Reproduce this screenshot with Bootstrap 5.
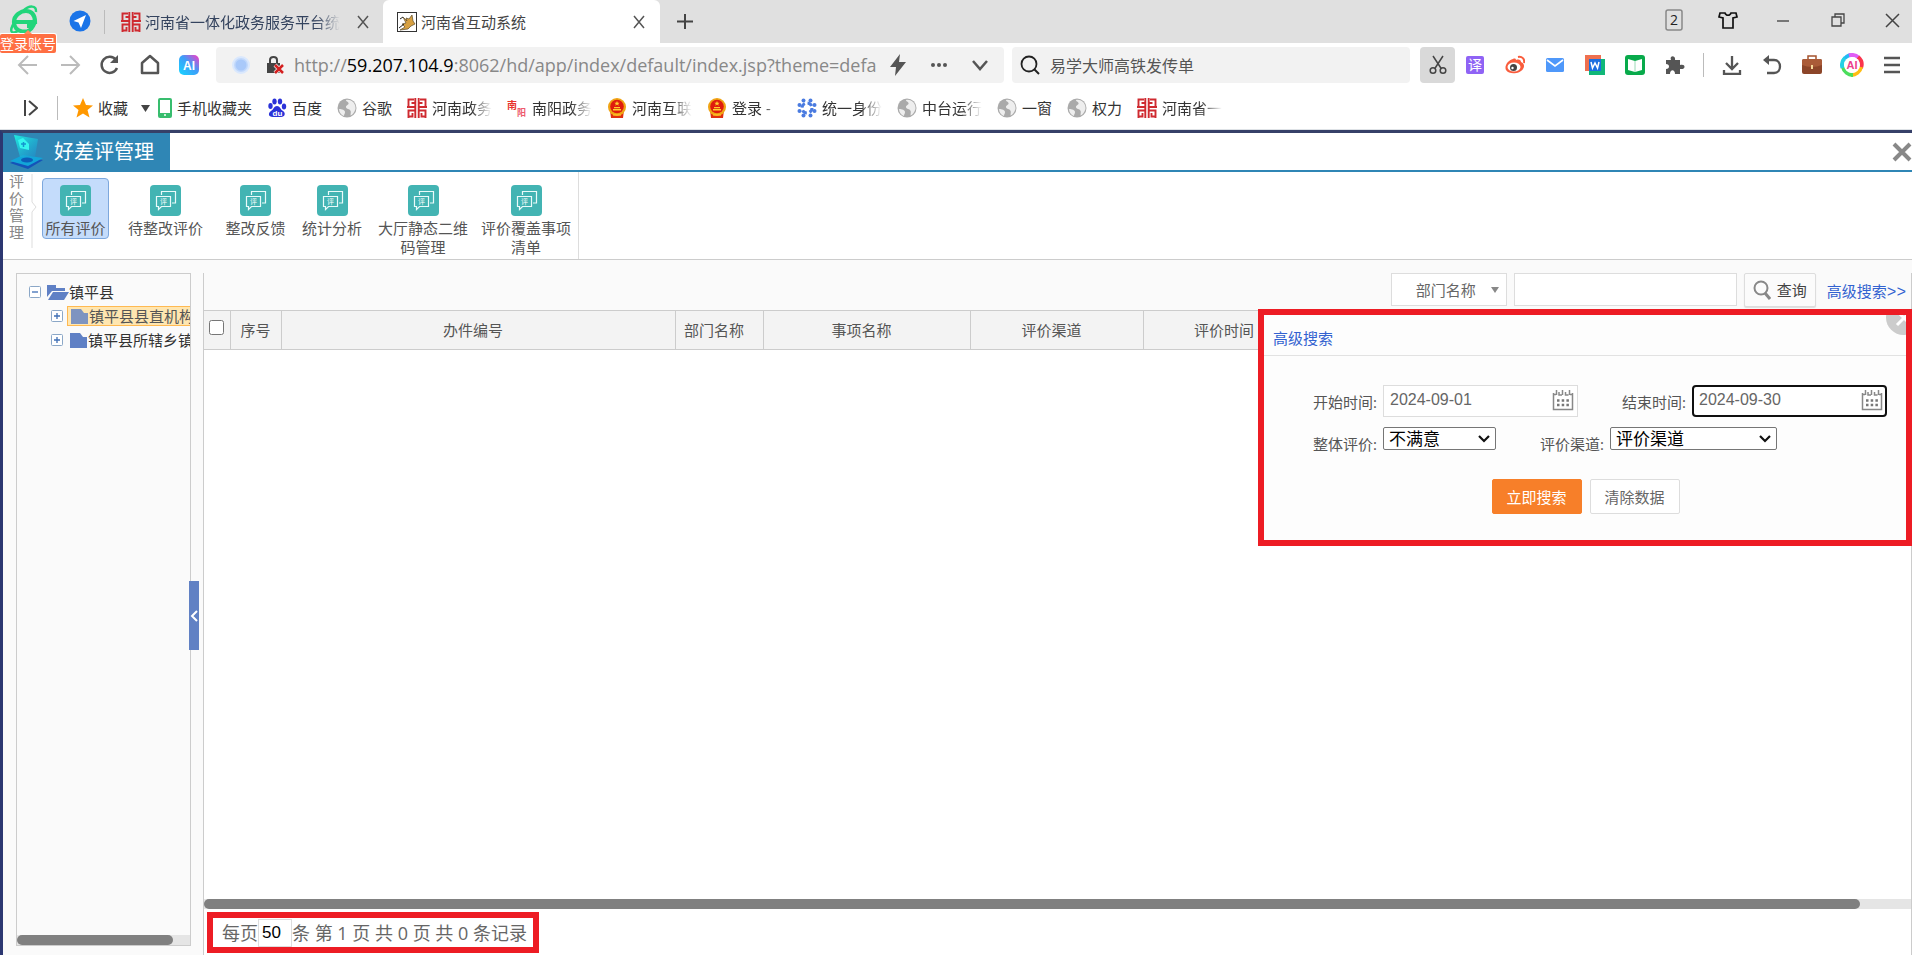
<!DOCTYPE html>
<html lang="zh-CN">
<head>
<meta charset="utf-8">
<meta name="viewport" content="width=device-width, initial-scale=1">
<title>河南省互动系统</title>
<link href="https://cdn.jsdelivr.net/npm/bootstrap@5.3.0/dist/css/bootstrap.min.css" rel="stylesheet">
<style>
:root{--line:#ccc;--blue:#2f86b5;--ink:#555;--red:#ed1c24}
html,body{height:100%}
body{font:15px/20px "Open Sans","Noto Sans CJK SC",sans-serif;color:var(--ink);background:#fff;overflow:hidden}
a{text-decoration:none;color:inherit}
svg{display:block;flex:none}
.ico{width:20px;height:20px}
.plain{border:0;background:none;padding:0;color:inherit;display:flex;align-items:center;justify-content:center}
.cjk{font-family:"Noto Sans CJK SC",sans-serif}
/* browser frame */
.tabstrip{height:43px;background:#e0e0e0}
.account{width:60px}
.account-tip{left:0;top:34px;z-index:2;height:19px;line-height:19px;width:56px;font-size:14px;color:#fff;background:#ff6f43;border-radius:2px;white-space:nowrap;text-align:center;box-shadow:0 0 0 1px #fff}
.account-tip::before{content:"";position:absolute;left:24px;top:-4px;border:solid transparent;border-width:0 4px 4px;border-bottom-color:#ff8a5c}
.vline{width:1px;height:24px;background:#bbb}
.tabstrip .vline{margin:0 12px}
.page-tab{height:43px;color:#34435e;padding:0 13px 0 4px}
.page-tab.current{background:#fff;border-radius:6px 6px 0 0;width:277px;color:#444;padding:0 14px}
.fade-end{white-space:nowrap;-webkit-mask-image:linear-gradient(90deg,#000 65%,transparent);mask-image:linear-gradient(90deg,#000 65%,transparent)}
.tab-title{-webkit-mask-image:linear-gradient(90deg,#000 88%,transparent);mask-image:linear-gradient(90deg,#000 88%,transparent)}
.toolbar{height:44px}
.urlbox{background:#f2f2f2;border-radius:4px;height:36px}
.urltext{font-size:18px;line-height:36px;color:#888;white-space:nowrap}
.urltext b{font-weight:400;color:#000}
.nav-keys{padding:0 16px;gap:16px}
.search-web{flex:0 0 398px;margin-right:10px}
.search-web input{font-size:16px;color:#555;border:0;background:none;outline:0;padding:0;width:300px}
.ext{width:40px;height:36px}
.ext.on{background:#d9d9d9;border-radius:4px;width:35px}
.bookmarks{height:43px;gap:15px;color:#333}
.bookmarks a{gap:5px}
.cut{width:60px}
.cut-sm{width:50px}
/* application */
.app{border-top:3px solid #364068;border-left:3px solid #2c3771}
.titlebar{height:39px;border-bottom:2px solid var(--blue)}
.titlebar h1{font-size:20px;line-height:37px;background:var(--blue);color:#fff;width:167px;padding-left:7px;gap:10px;font-weight:400;height:37px}
.ribbon{height:88px;border-bottom:1px solid var(--line)}
.ribbon-group{width:576px;border-right:1px solid #ddd}
.ribbon-name{width:26px;padding:1px 6px 0;line-height:17px;color:#888}
.tools{padding:6px 0 0 4px}
.tool{border:1px solid transparent;border-radius:4px;padding:6px 0 0;text-align:center;line-height:19px;background:none;color:#555;align-items:center;display:flex;flex-direction:column;gap:3px}
.tool.active{background:#c4dcfb;border-color:#7da8dd;height:61px;width:67px}
.w-a{width:113px}.w-b{width:67px}.w-c{width:86px}.w-d{width:96px}.w-e{width:110px}
.work{background:#fafafa;padding:13px 0 0 13px}
.tree{flex:0 0 175px;border:1px solid var(--line);margin-bottom:9px;color:#333}
.tree-rows{padding-top:6px}
.tree-row{height:24px;white-space:nowrap}
.tree-row.sub{padding-left:34px}
.pick{height:20px;padding:0 0 0 3px}
.pick.sel{background:#ffe6b0;border:1px solid #ffb951;color:#555}
.scroll{height:10px;background:#e5e5e5}
.scroll div{height:10px;background:#808080;border-radius:5px}
.rail{flex:0 0 12px}
.fold{left:-2px;top:308px;width:10px;height:69px;background:#6181c4;z-index:2}
.listing{border:solid var(--line);border-width:0 1px}
.filter{height:37px;background:#fafafa;padding-right:5px;gap:7px}
.filter .field{height:33px;border:1px solid #ddd;background:#fff;border-radius:0;font-size:15px;color:#666;outline:0}
.field-pick{width:116px;padding-left:24px;-webkit-appearance:none;appearance:none}
.more{color:#3262d0}
.more span{font:16px "Liberation Mono",monospace}
.caret{right:8px;top:14px;border:solid transparent;border-width:6px 4px 0;border-top-color:#888}
.query{width:72px;height:34px;border:1px solid #ddd;background:#fbfbfb;gap:6px;color:#444;padding:0;border-radius:2px;font-size:15px;box-shadow:0 1px 1px #ddd}
.heads{table-layout:fixed;width:100%;margin:0;border-collapse:collapse}
.heads th{height:39px;font-weight:400;text-align:center;background:#f3f3f3;border:1px solid var(--line);padding:0 10px 0 0;white-space:nowrap}
.heads th:first-child{border-left:0;padding:0}
.heads th:nth-child(2){padding:0}
.heads input{width:15px;height:15px;display:block;margin:-6px 0 0 5px}
.advanced{right:-1px;top:36px;width:654px;height:237px;border:6px solid var(--red);background:#fdfdfd;z-index:3;overflow:hidden}
.advanced h2{font-size:15px;line-height:20px;font-weight:400;color:#3262d0;margin:0;padding:13px 0 7px 9px;border-bottom:1px solid #e2e2e2;height:41px}
.close-round{right:-15px;top:-15px;width:35px;height:35px;border-radius:50%;background:#ccc}
.adv-form{padding:29px 0 0 49px}
.adv-row{height:42px;align-items:flex-start}
.adv-row label{width:70px;line-height:34px;white-space:nowrap}
.adv-row .second{margin-left:44px}
.datebox{width:195px;height:32px;border:1px solid #ddd;background:#fff;font:16px/20px "Liberation Sans",sans-serif;color:#666;outline:0;padding:0 6px 2px}
.datebox.focus{border:2px solid #101010;border-radius:4px;padding-left:5px}
.date-wrap svg{position:absolute;right:4px;top:4px}
.native{height:23px;border:1px solid #767676;border-radius:2px;color:#000;font:17px/20px "Noto Sans CJK SC",sans-serif;padding:0 0 1px 5px;-webkit-appearance:none;appearance:none;background:#fff url("data:image/svg+xml,%3Csvg xmlns='http://www.w3.org/2000/svg' width='12' height='8'%3E%3Cpath d='M1 1l5 5 5-5' fill='none' stroke='%23111' stroke-width='2.200'/%3E%3C/svg%3E") no-repeat right 5px center}
.adv-actions{padding:10px 48px 0 0}
.advanced .btn{width:90px;height:35px;border-radius:2px;font-size:15px;line-height:20px;padding:0}
.go,.go:hover{background:#f77f29;color:#fff;border-color:#f77f29}
.wipe{background:#fff;border-color:#ddd;color:#666}
.pager{border:6px solid var(--red);width:332px;height:41px;margin:3px 0 2px 3px;font-size:18px;padding-left:9px;white-space:nowrap;color:#666}
.pager input{width:34px;height:28px;border:1px solid #ddd;font:17px "Liberation Sans",sans-serif;color:#000;padding:0 0 0 3px;margin:0}
</style>
</head>
<body class="d-flex flex-column">
<svg width="0" height="0" class="position-absolute">
 <defs>
 <symbol id="gov" viewBox="0 0 20 20"><g fill="none" stroke="#cf2a30" stroke-width="1.900"><path d="M8.300 0v20M11.700 0v20M8 9H0M12 9h8M8 5H4.500M12 5h3.500M7 1.500H1.500V9M13 1.500h5.500V9M8 12.500H1.500V20M12 12.500h6.500V20M1 18.500h4.500V15M19 18.500h-4.500V15"/></g></symbol>
 <symbol id="globe" viewBox="0 0 20 20"><circle cx="10" cy="10" r="9.500" fill="#aaa"/><path d="M9 2c6-1 10 4 9.500 9-1 3-3 6-5 6.500 0-2 1-4-.5-5.500s-4-1-4-3 3-2 2.500-4S9 4 9 2zM2 11c3 0 6 1 6 3s-1 2-1 4C4 17 2 14 2 11z" fill="#fff" opacity=".8"/></symbol>
 <symbol id="emblem" viewBox="0 0 20 20"><path d="M3 12h14l-1 8H4z" fill="#e0300f"/><circle cx="10" cy="9" r="9" fill="#f0a414"/><circle cx="10" cy="8.500" r="6.800" fill="#df1c0d"/><path d="M10 3l.8 1.700h1.800l-1.400 1.200.5 1.800L10 6.600 8.300 7.700l.5-1.800-1.400-1.200h1.800zM6 11h8v1.500H6zM7 9h6v1.200H7zM6 16.500h8v1H6z" fill="#ffce2e"/></symbol>
 <symbol id="cross" viewBox="0 0 14 14"><path d="M2 1l10 12M12 1L2 13" stroke="#555" stroke-width="1.500" fill="none"/></symbol>
 <symbol id="review" viewBox="0 0 31 31"><rect width="31" height="31" rx="4" fill="#43b4b3"/><g fill="none" stroke="#eafafa" stroke-width="1.200"><path d="M11.500 10V6.500h14V18H22M6.500 11.500h14v10h-9l-3 3v-3h-2z"/></g><text x="10" y="19" font-size="7" fill="#fff" font-family="Noto Sans CJK SC">评</text></symbol>
 <symbol id="folder" viewBox="0 0 18 16"><path d="M0 1h10l3 4h4v11H0z" fill="#5f80c5"/></symbol>
 <symbol id="plus" viewBox="0 0 12 12"><rect x=".5" y=".5" width="11" height="11" rx="1" fill="#fff" stroke="#8ba7c7"/><path d="M3 6h6M6 3v6" stroke="#3f6fb5" stroke-width="1.300"/></symbol>
 <symbol id="cal" viewBox="0 0 22 22"><path d="M1.500 4v16.500h19V4M4.500 1v5M10.500 1v5M17.500 1v5M1 5.500h3M7 3v3h3M13.500 3v3h3M20 5.500h-2" fill="none" stroke="#888" stroke-width="1.500"/><path d="M5 11.500h12M5 16h12" stroke="#777" stroke-width="2.500" stroke-dasharray="2.500 2.200"/></symbol>
 </defs>
</svg>

<header>
 <div class="tabstrip d-flex align-items-center position-relative">
  <div class="account ps-2 pb-1"><svg width="32" height="32" viewBox="0 0 32 32"><path d="M7 18h20c0-8-4-11-9-11S6 11 6 18c0 11 15 13 19 4h-6" fill="none" stroke="#22d57b" stroke-width="4.200"/><path d="M6 19C1 27 3 31 10 27M15 7c6-6 14-6 13 1" fill="none" stroke="#22d57b" stroke-width="2.500"/></svg></div>
  <a href="#" class="account-tip position-absolute cjk">登录账号</a>
  <svg class="ms-2" width="24" height="24" viewBox="0 0 24 24"><circle cx="12" cy="11" r="10.500" fill="#1b74e8"/><path d="M18 5L5.500 11l5 1.500L13 18z" fill="#fff"/></svg>
  <span class="vline"></span>
  <div class="page-tab d-flex align-items-center">
   <svg class="ico me-1"><use href="#gov"/></svg><span class="fade-end tab-title">河南省一体化政务服务平台统</span>
   <button class="plain ms-3" aria-label="关闭"><svg width="14" height="14"><use href="#cross"/></svg></button>
  </div>
  <div class="page-tab current d-flex align-items-center">
   <svg class="ico me-1" viewBox="0 0 20 20"><rect x=".5" y=".5" width="19" height="19" fill="#fff" stroke="#333"/><path d="M9 6l3 1 3-4 1 6 2 3-4 2-3 3-8 1 5-3-3-3 4-1-3-6 4 4z" fill="#d7a041" stroke="#5b4a28" stroke-width=".7"/><path d="M2 16l5-4M3 7l3-2" stroke="#222"/></svg><span>河南省互动系统</span>
   <button class="plain ms-auto" aria-label="关闭"><svg width="14" height="14"><use href="#cross"/></svg></button>
  </div>
  <button class="plain ms-3" aria-label="新标签"><svg width="18" height="18" viewBox="0 0 18 18"><path d="M9 1v15M1 8.500h16" stroke="#444" stroke-width="2"/></svg></button>
  <div class="ms-auto d-flex align-items-center pe-1 pb-1">
   <button class="plain me-4" aria-label="窗口"><svg width="33" height="22" viewBox="0 0 33 22"><rect x="9" y="1" width="16" height="20" rx="2" fill="none" stroke="#888" stroke-width="1.500"/><text x="13" y="16" font-size="14" font-family="Open Sans" fill="#222">2</text></svg></button>
   <button class="plain me-4" aria-label="皮肤"><svg width="30" height="20" viewBox="0 0 30 20"><path d="M6 3h5c1 3 5 3 6 0h5l1 4-4 1v10H9V8L5 7z" fill="none" stroke="#111" stroke-width="1.700"/></svg></button>
   <button class="plain me-4" aria-label="最小化"><svg width="30" height="20" viewBox="0 0 30 20"><path d="M9 11h12" stroke="#555" stroke-width="1.500"/></svg></button>
   <button class="plain me-4" aria-label="还原"><svg width="32" height="20" viewBox="0 0 32 20"><path d="M10 7h9v9h-9zM13 7V4h9v9h-3" fill="none" stroke="#444" stroke-width="1.300"/></svg></button>
   <button class="plain" aria-label="关闭窗口"><svg width="30" height="20" viewBox="0 0 30 20"><path d="M8 4l13 13M21 4L8 17" stroke="#444" stroke-width="1.500"/></svg></button>
  </div>
 </div>

 <div class="toolbar d-flex align-items-center">
  <div class="nav-keys d-flex">
   <button class="plain" aria-label="后退"><svg width="25" height="22" viewBox="0 0 25 22"><path d="M21 11H4M12 2l-9 9 9 9" fill="none" stroke="#bbb" stroke-width="2"/></svg></button>
   <button class="plain" aria-label="前进"><svg width="25" height="22" viewBox="0 0 25 22"><path d="M4 11h17M13 2l9 9-9 9" fill="none" stroke="#bbb" stroke-width="2"/></svg></button>
   <button class="plain" aria-label="刷新"><svg width="24" height="22" viewBox="0 0 24 22"><path d="M19 14a8 8 0 1 1-1-8" fill="none" stroke="#555" stroke-width="2.500"/><path d="M20 1v8h-8z" fill="#555"/></svg></button>
   <button class="plain" aria-label="主页"><svg width="24" height="22" viewBox="0 0 24 22"><path d="M4 9l8-7 8 7v10H4z" fill="none" stroke="#555" stroke-width="2.500" stroke-linejoin="round"/></svg></button>
   <button class="plain" aria-label="AI"><svg width="22" height="22" viewBox="0 0 22 22"><defs><linearGradient id="ai" x1="0" x2="1" y1="1" y2="0"><stop stop-color="#15d6ff"/><stop offset=".55" stop-color="#3f9cf8"/><stop offset="1" stop-color="#ff37c4"/></linearGradient></defs><rect x="1" y="1" width="20" height="20" rx="5" fill="url(#ai)"/><text x="5" y="16" font-size="12" font-weight="700" fill="#fff" font-family="Liberation Sans">AI</text></svg></button>
  </div>
  <div class="urlbox d-flex align-items-center flex-grow-1 px-3 me-2" style="min-width:0">
   <svg width="18" height="20" viewBox="0 0 18 20"><circle cx="9" cy="10" r="8" fill="#c1d8fb" stroke="#dae8fd" stroke-width="2"/><circle cx="9" cy="10" r="5.500" fill="#a9c9fa"/></svg>
   <svg class="ms-3 me-2" width="20" height="20" viewBox="0 0 20 20"><path d="M4 8V5c0-4 7-4 7 0v3" fill="none" stroke="#444" stroke-width="2"/><path d="M1 8h13v10H1z" fill="#444"/><path d="M9 10l8 8M17 10l-8 8" stroke="#f2f2f2" stroke-width="4"/><path d="M9 10l8 8M17 10l-8 8" stroke="#d42020" stroke-width="2.500"/></svg>
   <div class="urltext flex-grow-1">http://<b>59.207.104.9</b>:8062/hd/app/index/default/index.jsp?theme=defa</div>
   <svg class="me-3 ms-2" width="16" height="22" viewBox="0 0 16 22"><path d="M10 0L0 13h6L5 22 16 8H9z" fill="#555"/></svg>
   <svg class="mx-2" width="18" height="6" viewBox="0 0 18 6"><g fill="#555"><circle cx="3" cy="3" r="2"/><circle cx="9" cy="3" r="2"/><circle cx="15" cy="3" r="2"/></g></svg>
   <svg class="ms-3" width="16" height="12" viewBox="0 0 16 12"><path d="M1 2l7 8 7-8" fill="none" stroke="#555" stroke-width="2.500"/></svg>
  </div>
  <div class="urlbox search-web d-flex align-items-center ps-2">
   <svg class="me-2" width="22" height="22" viewBox="0 0 22 22"><circle cx="9" cy="10" r="7.500" fill="none" stroke="#222" stroke-width="1.800"/><path d="M14 15l5 5" stroke="#222" stroke-width="2"/></svg>
   <input class="cjk" aria-label="搜索" value="易学大师高铁发传单">
  </div>
  <div class="d-flex align-items-center">
   <button class="plain ext on" aria-label="截图"><svg width="20" height="20" viewBox="0 0 20 20"><g fill="none" stroke="#444" stroke-width="1.500"><path d="M5 1l8.500 13M15 1L6.500 14"/><circle cx="5" cy="15.500" r="2.800"/><circle cx="15" cy="15.500" r="2.800"/></g></svg></button>
   <button class="plain ext" aria-label="翻译"><svg class="ico" viewBox="0 0 20 20"><rect x="1" y="1" width="18" height="18" rx="2" fill="#8f63f5"/><text x="3" y="15" font-size="14" fill="#fff" font-family="Noto Sans CJK SC">译</text></svg></button>
   <button class="plain ext" aria-label="微博"><svg class="ico" viewBox="0 0 20 20"><path d="M8 4c2-1 3 0 3 1 3-1 5 0 5 2 3 1 4 4 2 7-3 5-14 6-17 1C-1 11 3 5 8 4z" fill="#f95c3c"/><ellipse cx="9" cy="12" rx="6.500" ry="4.500" fill="#fff"/><circle cx="8.500" cy="12.500" r="3.500" fill="#444"/><circle cx="7.500" cy="13" r="1.200" fill="#fff"/><path d="M13 2c4-1 7 2 6 6" fill="none" stroke="#f95c3c" stroke-width="2"/></svg></button>
   <button class="plain ext" aria-label="邮箱"><svg class="ico" viewBox="0 0 20 20"><rect x="1" y="3" width="18" height="14" rx="1.500" fill="#4f98fa"/><path d="M2 5l8 6 8-6" fill="none" stroke="#fff" stroke-width="1.600"/></svg></button>
   <button class="plain ext" aria-label="文档"><svg class="ico" viewBox="0 0 20 20"><path d="M0 0h16v16H0z" fill="#ef704f"/><path d="M4 4h16v16H4z" fill="#10b778"/><path d="M4 4h12v12H4z" fill="#1b6fe0"/><path d="M6 7l1.500 6L10 8l2.500 5L14 7" fill="none" stroke="#fff" stroke-width="1.500"/></svg></button>
   <button class="plain ext" aria-label="阅读"><svg class="ico" viewBox="0 0 20 20"><rect width="20" height="20" rx="3" fill="#08aa4b"/><path d="M3 4l7 2 7-2v11l-7 2-7-2z" fill="#fff"/><path d="M10 6v11" stroke="#9cdab6"/></svg></button>
   <button class="plain ext" aria-label="扩展"><svg class="ico" viewBox="0 0 20 20"><path d="M1 5h5c-2-5 5-5 4 0h5v5c6-2 6 5 0 4v5h-5c0-5-5-5-5 0H1v-5c4 0 4-5 0-5z" fill="#555"/></svg></button>
   <span class="vline ms-2"></span>
   <button class="plain ext ms-2" aria-label="下载"><svg class="ico" viewBox="0 0 20 20"><path d="M10 1v13M4 8l6 6 6-6M2 15v4h16v-4" fill="none" stroke="#555" stroke-width="2.300"/></svg></button>
   <button class="plain ext" aria-label="撤销"><svg class="ico" viewBox="0 0 20 20"><path d="M6 5h6c8 0 8 13 0 13H5" fill="none" stroke="#555" stroke-width="2.300"/><path d="M7 0v10L1 5z" fill="#555"/></svg></button>
   <button class="plain ext" aria-label="工具箱"><svg class="ico" viewBox="0 0 20 20"><path d="M6 4V1h8v3" fill="none" stroke="#a5532e" stroke-width="1.500"/><rect y="4" width="20" height="15" rx="2" fill="#8c4529"/><path d="M0 6q0-2 2-2h16q2 0 2 2v4q-10 4-20 0z" fill="#aa5b38"/><path d="M9 10h2v4H9z" fill="#f5d89a"/></svg></button>
   <button class="plain ext" aria-label="AI助手"><svg width="24" height="24" viewBox="0 0 24 24"><g fill="none" stroke-width="4"><path d="M4 7a10 10 0 0 1 7-5" stroke="#22b8f7"/><path d="M9 2.500a10 10 0 0 1 10 2.500" stroke="#e05cf5"/><path d="M18 4a10 10 0 0 1 3 11" stroke="#fb344c"/><path d="M21 14a10 10 0 0 1-10 8" stroke="#ffbd12"/><path d="M13 22a10 10 0 0 1-10-8" stroke="#4bdd5c"/><path d="M2.500 15A10 10 0 0 1 5 5" stroke="#23d1e4"/></g><circle cx="12" cy="12" r="8" fill="#fff"/><text x="6.500" y="16" font-size="11" font-weight="700" fill="#ec3f8c" font-family="Liberation Sans">AI</text></svg></button>
   <button class="plain ext" aria-label="菜单"><svg class="ico" viewBox="0 0 20 20"><path d="M2 3h16M2 10h16M2 17h16" stroke="#555" stroke-width="2.300"/></svg></button>
  </div>
 </div>

 <nav class="bookmarks d-flex align-items-center ps-4 border-bottom">
  <svg width="14" height="18" viewBox="0 0 14 18"><path d="M1 1v16M5 2l8 7-8 7" fill="none" stroke="#444" stroke-width="2"/></svg>
  <span class="vline ms-1"></span>
  <div class="d-flex gap-2">
  <a href="#" class="d-flex align-items-center"><svg class="ico" viewBox="0 0 20 20"><path d="M10 0l3 7 7 .5-5.500 4.500 2 7.500L10 15.500 3.500 19.500l2-7.500L0 7.500 7 7z" fill="#ff9800"/></svg>收藏<svg class="ms-2" width="9" height="7"><path d="M0 0h9L4.500 7z" fill="#444"/></svg></a>
  <a href="#" class="d-flex align-items-center"><svg width="14" height="20" viewBox="0 0 14 20"><rect x="1" y="1" width="12" height="18" rx="1" fill="#fff" stroke="#38bd6e" stroke-width="2"/><path d="M1 15h12v4H1z" fill="#38bd6e"/><circle cx="7" cy="17" r="1" fill="#fff"/></svg>手机收藏夹</a>
  </div>
  <a href="#" class="d-flex align-items-center"><svg class="ico" viewBox="0 0 20 20"><g fill="#2a32d8"><ellipse cx="3.500" cy="8" rx="2.200" ry="3"/><ellipse cx="7.500" cy="3.500" rx="2.200" ry="3"/><ellipse cx="13" cy="3.500" rx="2.200" ry="3"/><ellipse cx="17" cy="8.500" rx="2.200" ry="3"/><path d="M10 8c3 0 3 3 6 5s2 6-2 6H6c-5 0-5-4-2-6s3-5 6-5z"/></g><text x="5.500" y="17.500" font-size="8" font-weight="700" fill="#fff" font-family="Liberation Sans">du</text></svg>百度</a>
  <a href="#" class="d-flex align-items-center"><svg class="ico"><use href="#globe"/></svg>谷歌</a>
  <a href="#" class="d-flex align-items-center"><svg class="ico"><use href="#gov"/></svg><span class="fade-end cut">河南政务</span></a>
  <a href="#" class="d-flex align-items-center"><svg class="ico" viewBox="0 0 20 20"><text x="0" y="11" font-size="10" font-weight="700" fill="#e8322c" font-family="Noto Sans CJK SC">南</text><text x="10" y="18" font-size="9" font-weight="700" fill="#ee5a6c" font-family="Noto Sans CJK SC">阳</text></svg><span class="fade-end cut">南阳政务</span></a>
  <a href="#" class="d-flex align-items-center"><svg class="ico"><use href="#emblem"/></svg><span class="fade-end cut">河南互联</span></a>
  <a href="#" class="d-flex align-items-center"><svg class="ico"><use href="#emblem"/></svg><span class="fade-end cut-sm">登录 -</span></a>
  <a href="#" class="d-flex align-items-center"><svg class="ico" viewBox="0 0 20 20"><g fill="#4a7be0"><circle cx="6.500" cy="2.500" r="2"/><circle cx="13.500" cy="2.500" r="2"/><circle cx="17.500" cy="7" r="2"/><circle cx="17.500" cy="13" r="2"/><circle cx="13.500" cy="17.500" r="2"/><circle cx="6.500" cy="17.500" r="2"/><circle cx="2.500" cy="13" r="2"/><circle cx="2.500" cy="7" r="2"/></g><circle cx="10" cy="10" r="5" fill="none" stroke="#4a7be0" stroke-width="3" stroke-dasharray="5 2.850"/></svg><span class="fade-end cut">统一身份</span></a>
  <a href="#" class="d-flex align-items-center"><svg class="ico"><use href="#globe"/></svg><span class="fade-end cut">中台运行</span></a>
  <a href="#" class="d-flex align-items-center"><svg class="ico"><use href="#globe"/></svg>一窗</a>
  <a href="#" class="d-flex align-items-center"><svg class="ico"><use href="#globe"/></svg>权力</a>
  <a href="#" class="d-flex align-items-center"><svg class="ico"><use href="#gov"/></svg><span class="fade-end cut">河南省一</span></a>
 </nav>
</header>

<main class="app flex-grow-1 d-flex flex-column" style="min-height:0">
 <div class="titlebar d-flex justify-content-between align-items-center">
  <h1 class="d-flex align-items-center m-0"><svg width="34" height="36" viewBox="0 0 34 36"><defs><linearGradient id="holo" x2="1" y2="1"><stop stop-color="#1ff0e0"/><stop offset="1" stop-color="#1a8fd0" stop-opacity=".5"/></linearGradient></defs><path d="M0 29l13-6 20 3-15 9z" fill="#1553b8"/><path d="M0 27l13-6 20 3-15 8z" fill="#12a5d8"/><path d="M4 1l24 4-3 18-15 0z" fill="url(#holo)"/><ellipse cx="17" cy="26" rx="6" ry="2.500" fill="#0d5db8"/><path d="M8 6l5-2 6 6v6l-9-2z" fill="#35f5ef"/><path d="M11 10h5M13.500 8v5" stroke="#1595cf" stroke-width="1.500"/></svg>好差评管理</h1>
  <button class="plain" aria-label="关闭"><svg width="20" height="20" viewBox="0 0 20 20"><path d="M2 2l16 16M18 2L2 18" stroke="#888" stroke-width="4"/></svg></button>
 </div>

 <div class="ribbon">
  <div class="ribbon-group d-flex h-100">
   <div class="ribbon-name">评价管理</div>
   <svg width="9" height="78" viewBox="0 0 9 78"><path d="M3 2v28l4 5-4 5v36" fill="none" stroke="#ddd"/></svg>
   <div class="tools d-flex align-items-start">
    <button class="tool active"><svg width="31" height="31"><use href="#review"/></svg>所有评价</button>
    <button class="tool w-a"><svg width="31" height="31"><use href="#review"/></svg>待整改评价</button>
    <button class="tool w-b"><svg width="31" height="31"><use href="#review"/></svg>整改反馈</button>
    <button class="tool w-c"><svg width="31" height="31"><use href="#review"/></svg>统计分析</button>
    <button class="tool w-d"><svg width="31" height="31"><use href="#review"/></svg><span>大厅静态二维<br>码管理</span></button>
    <button class="tool w-e"><svg width="31" height="31"><use href="#review"/></svg><span>评价覆盖事项<br>清单</span></button>
   </div>
  </div>
 </div>

 <div class="work flex-grow-1 d-flex" style="min-height:0">
  <aside class="tree d-flex flex-column overflow-hidden">
   <div class="tree-rows flex-grow-1">
    <div class="tree-row d-flex align-items-center ps-2"><svg class="ms-1" width="12" height="12" viewBox="0 0 12 12"><rect x=".5" y=".5" width="11" height="11" rx="1" fill="#fff" stroke="#8ba7c7"/><path d="M3 6h6" stroke="#3f6fb5" stroke-width="1.300"/></svg><svg class="ms-1" width="24" height="16" viewBox="0 0 24 16"><path d="M2 1h9v3h9v3H7l-5 6z" fill="#5f80c5"/><path d="M8 8h16l-5 8H3z" fill="#5f80c5"/></svg>镇平县</div>
    <div class="tree-row sub d-flex align-items-center"><svg width="12" height="12"><use href="#plus"/></svg><span class="pick sel d-flex align-items-center ms-1 flex-grow-1"><svg width="18" height="16" opacity=".8"><use href="#folder"/></svg>镇平县县直机构</span></div>
    <div class="tree-row sub d-flex align-items-center"><svg width="12" height="12"><use href="#plus"/></svg><span class="pick d-flex align-items-center ms-1"><svg width="18" height="16"><use href="#folder"/></svg>镇平县所辖乡镇</span></div>
   </div>
   <div class="scroll"><div style="width:90%"></div></div>
  </aside>
  <div class="rail position-relative"><button class="plain fold position-absolute" aria-label="收起"><svg width="8" height="12" viewBox="0 0 8 12"><path d="M7 1L2 6l5 5" fill="none" stroke="#fff" stroke-width="2"/></svg></button></div>

  <section class="listing flex-grow-1 d-flex flex-column bg-white position-relative" style="min-width:0">
   <div class="filter d-flex justify-content-end align-items-start">
    <div class="position-relative"><select class="field field-pick" aria-label="查询字段"><option>部门名称</option></select><span class="caret position-absolute"></span></div>
    <input class="field flex-shrink-0" style="width:223px" aria-label="关键字">
    <button class="query d-flex align-items-center justify-content-center"><svg width="18" height="20" viewBox="0 0 18 20"><circle cx="8" cy="8" r="6.500" fill="none" stroke="#888" stroke-width="2"/><path d="M12 13l5 6" stroke="#888" stroke-width="3"/></svg>查询</button>
    <a href="#" class="more text-nowrap mt-2 ms-1">高级搜索<span>&gt;&gt;</span></a>
   </div>
   <table class="heads">
    <colgroup><col style="width:26px"><col style="width:51px"><col style="width:394px"><col style="width:88px"><col style="width:207px"><col style="width:173px"><col style="width:172px"><col></colgroup>
    <thead><tr><th><input type="checkbox" aria-label="全选"></th><th>序号</th><th>办件编号</th><th>部门名称</th><th>事项名称</th><th>评价渠道</th><th>评价时间</th><th></th></tr></thead>
   </table>
   <div class="flex-grow-1"></div>
   <div class="scroll"><div style="width:97%"></div></div>
   <div class="pager d-flex align-items-center"><label for="size">每页</label><input id="size" value="50"><span>条 第 1 页 共 0 页 共 0 条记录</span></div>

   <div class="advanced position-absolute">
    <h2>高级搜索</h2>
    <button class="plain close-round position-absolute" aria-label="关闭"><svg width="20" height="20" viewBox="0 0 20 20"><path d="M3 3l14 14M17 3L3 17" stroke="#fff" stroke-width="3"/></svg></button>
    <form class="adv-form">
     <div class="adv-row d-flex"><label for="from">开始时间:</label><div class="date-wrap position-relative"><input id="from" class="datebox" value="2024-09-01"><svg width="22" height="22"><use href="#cal"/></svg></div>
      <label for="to" class="second">结束时间:</label><div class="date-wrap position-relative"><input id="to" class="datebox focus" value="2024-09-30"><svg width="22" height="22"><use href="#cal"/></svg></div></div>
     <div class="adv-row d-flex"><label for="rate">整体评价:</label><select id="rate" class="native" style="width:113px"><option>不满意</option></select>
      <label for="way" class="second">评价渠道:</label><select id="way" class="native" style="width:167px"><option>评价渠道</option></select></div>
     <div class="adv-actions d-flex gap-2 justify-content-center"><button type="button" class="btn go">立即搜索</button><button type="button" class="btn wipe">清除数据</button></div>
    </form>
   </div>
  </section>
 </div>
</main>
<script src="https://cdn.jsdelivr.net/npm/bootstrap@5.3.0/dist/js/bootstrap.bundle.min.js"></script>
</body>
</html>
